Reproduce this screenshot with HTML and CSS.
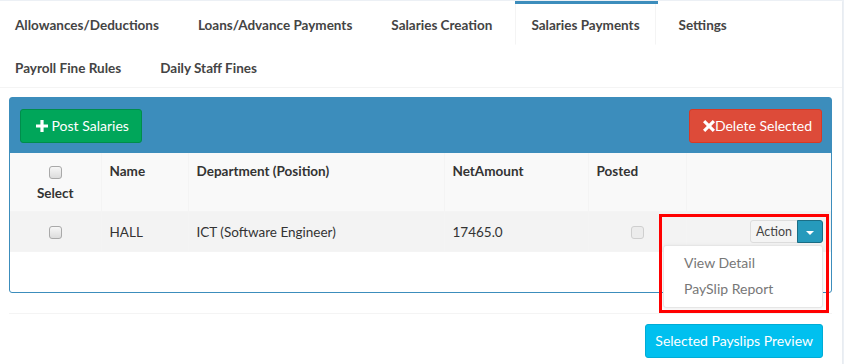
FILE: index.html
```html
<!DOCTYPE html>
<html>

<head>
  <title>Payroll - Salaries Payments</title>
  <link rel="stylesheet" href="styles.css">
</head>

<body>
  <div class="tabs-box">
    <ul class="tabs">
      <li><a href="#">Allowances/Deductions</a></li>
      <li><a href="#">Loans/Advance Payments</a></li>
      <li><a href="#">Salaries Creation</a></li>
      <li class="active"><a href="#">Salaries Payments</a></li>
      <li><a href="#">Settings</a></li>
      <li><a href="#">Payroll Fine Rules</a></li>
      <li><a href="#">Daily Staff Fines</a></li>
    </ul>

    <div class="tab-content">
      <div class="panel">
        <div class="panel-head">
          <button class="btn btn-green">
            <svg class="ico" viewBox="0 0 12 12" width="12" height="12"><path d="M4.4 0h3.2v4.4H12v3.2H7.6V12H4.4V7.6H0V4.4h4.4z" fill="#fff"/></svg>
            Post Salaries
          </button>
          <button class="btn btn-red">
            <svg class="ico" viewBox="0 0 12 12" width="12" height="12"><path d="M2.2 0L6 3.8 9.8 0 12 2.2 8.2 6 12 9.8 9.8 12 6 8.2 2.2 12 0 9.8 3.8 6 0 2.2z" fill="#fff"/></svg>Delete Selected
          </button>
        </div>
        <div class="panel-body">
          <table class="grid">
            <colgroup>
              <col style="width:91px">
              <col style="width:87px">
              <col style="width:256px">
              <col style="width:144px">
              <col style="width:98px">
              <col>
            </colgroup>
            <thead>
              <tr>
                <th class="center"><input type="checkbox" class="chk chk-head">Select</th>
                <th>Name</th>
                <th>Department (Position)</th>
                <th>NetAmount</th>
                <th>Posted</th>
                <th></th>
              </tr>
            </thead>
            <tbody>
              <tr>
                <td class="center"><input type="checkbox" class="chk"></td>
                <td>HALL</td>
                <td>ICT (Software Engineer)</td>
                <td>17465.0</td>
                <td class="center"><input type="checkbox" class="chk" disabled></td>
                <td class="act">
                  <div class="btn-group">
                    <button class="btn-xs">Action</button><button class="btn-xs caret-btn"><span class="caret"></span></button>
                    <ul class="menu">
                      <li><a href="#">View Detail</a></li>
                      <li><a href="#">PaySlip Report</a></li>
                    </ul>
                  </div>
                  <div class="highlight"></div>
                </td>
              </tr>
            </tbody>
          </table>
        </div>
      </div>

      <hr class="sep">

      <div class="footer-actions">
        <button class="btn btn-cyan">Selected Payslips Preview</button>
      </div>
    </div>
  </div>
</body>

</html>
```
FILE: styles.css
```css
/* Payroll page - tabs, salaries table */
body {
  margin: 0;
  background: #ecf0f5;
  font-family: Lato, "Liberation Sans", sans-serif;
  font-size: 13.5px;
  line-height: 20px;
  color: #333;
}

.tabs-box {
  width: 842px;
  margin-top: 1px;
  background: #fff;
  min-height: 363px;
  box-shadow: 0 1px 1px rgba(0, 0, 0, 0.1);
}

.tabs {
  display: flex;
  flex-wrap: wrap;
  list-style: none;
  margin: 0 0 0 -1px;
  padding: 0;
  border-bottom: 1px solid #f4f4f4;
}

.tabs li {
  border-top: 3px solid transparent;
  margin-right: 5px;
  margin-bottom: -1px;
}

.tabs li a {
  display: block;
  padding: 11px 15px 9px;
  margin-right: 2px;
  border: 1px solid transparent;
  border-top: 0;
  color: #444;
  font-weight: bold;
  text-decoration: none;
}

.tabs li.active {
  border-top-color: #3c8dbc;
}

.tabs li.active a {
  border-left-color: #f4f4f4;
  border-right-color: #f4f4f4;
  background: #fff;
}

.tab-content {
  padding: 9px 10px 10px 9px;
}

.panel {
  border: 1px solid #3c8dbc;
  border-radius: 3px;
}

.panel-head {
  display: flex;
  justify-content: space-between;
  background: #3c8dbc;
  padding: 11px 9px 10px 10px;
}

.btn {
  font-family: inherit;
  font-size: 14px;
  line-height: 20px;
  padding: 6px 12px;
  border: 1px solid transparent;
  border-radius: 3px;
  color: #fff;
  cursor: pointer;
}

.btn .ico {
  vertical-align: -1px;
}

.btn-green {
  background: #00a65a;
  border-color: #008d4c;
  padding: 6px 12px 6px 15px;
}

.btn-red {
  background: #dd4b39;
  border-color: #d73925;
  padding: 6px 9px 6px 13px;
}

.btn-cyan {
  background: #00c0ef;
  border-color: #00acd6;
  padding: 6px 9px;
}

.panel-body {
  padding-bottom: 40px;
}

.grid {
  width: 100%;
  table-layout: fixed;
  border-collapse: collapse;
}

.grid th,
.grid td {
  border: 1px solid #f4f4f4;
  padding: 8px;
  text-align: left;
  vertical-align: top;
}

.grid thead tr:first-child th {
  border-top: 0;
}

.grid th:first-child,
.grid td:first-child {
  border-left: 0;
}

.grid th:last-child,
.grid td:last-child {
  border-right: 0;
}

.grid th {
  background: #f9f9f9;
  font-weight: bold;
}

.grid tbody td {
  background: #f3f3f3;
  vertical-align: middle;
}

.grid .center {
  text-align: center;
}

.chk {
  appearance: none;
  width: 13px;
  height: 13px;
  margin: 4px 0 0;
  border: 1px solid #a9a9a9;
  border-radius: 3px;
  background: linear-gradient(#f7f7f7, #dcdcdc);
  vertical-align: top;
}

.chk-head {
  display: block;
  margin: 5px auto 4px;
}

.chk:disabled {
  border-color: #cfcfcf;
  background: #ececec;
}

.act {
  position: relative;
  text-align: right !important;
}

.btn-group {
  position: relative;
  display: inline-flex;
  vertical-align: middle;
}

.btn-xs {
  font-family: inherit;
  font-size: 12.5px;
  line-height: 19px;
  padding: 1px 5px;
  background: #f4f4f4;
  border: 1px solid #ddd;
  color: #444;
  border-radius: 3px 0 0 3px;
  height: 23px;
}

.caret-btn {
  width: 26px;
  background: #269abc;
  border-color: #1b6d85;
  border-radius: 0 3px 3px 0;
  margin-left: -1px;
}

.caret {
  display: inline-block;
  width: 0;
  height: 0;
  border-top: 4px solid #fff;
  border-left: 4px solid transparent;
  border-right: 4px solid transparent;
  vertical-align: middle;
}

.menu {
  position: absolute;
  top: 100%;
  right: 0;
  z-index: 10;
  width: 158px;
  margin: 2px 0 0;
  padding: 4px 0 5px;
  list-style: none;
  background: #fff;
  border: 1px solid #e6e6e6;
  border-radius: 3px;
  box-shadow: 0 1px 4px rgba(0, 0, 0, 0.08);
  text-align: left;
}

.menu li a {
  display: block;
  padding: 3px 20px;
  color: #777;
  font-size: 14px;
  text-decoration: none;
}

.highlight {
  position: absolute;
  left: -28px;
  top: 2px;
  width: 164px;
  height: 93px;
  border: 3px solid #f00;
  z-index: 20;
}

.sep {
  margin: 20px 0 10px;
  border: 0;
  border-top: 1px solid #f4f4f4;
}

.footer-actions {
  display: flex;
  justify-content: flex-end;
  padding-right: 9px;
}
```
